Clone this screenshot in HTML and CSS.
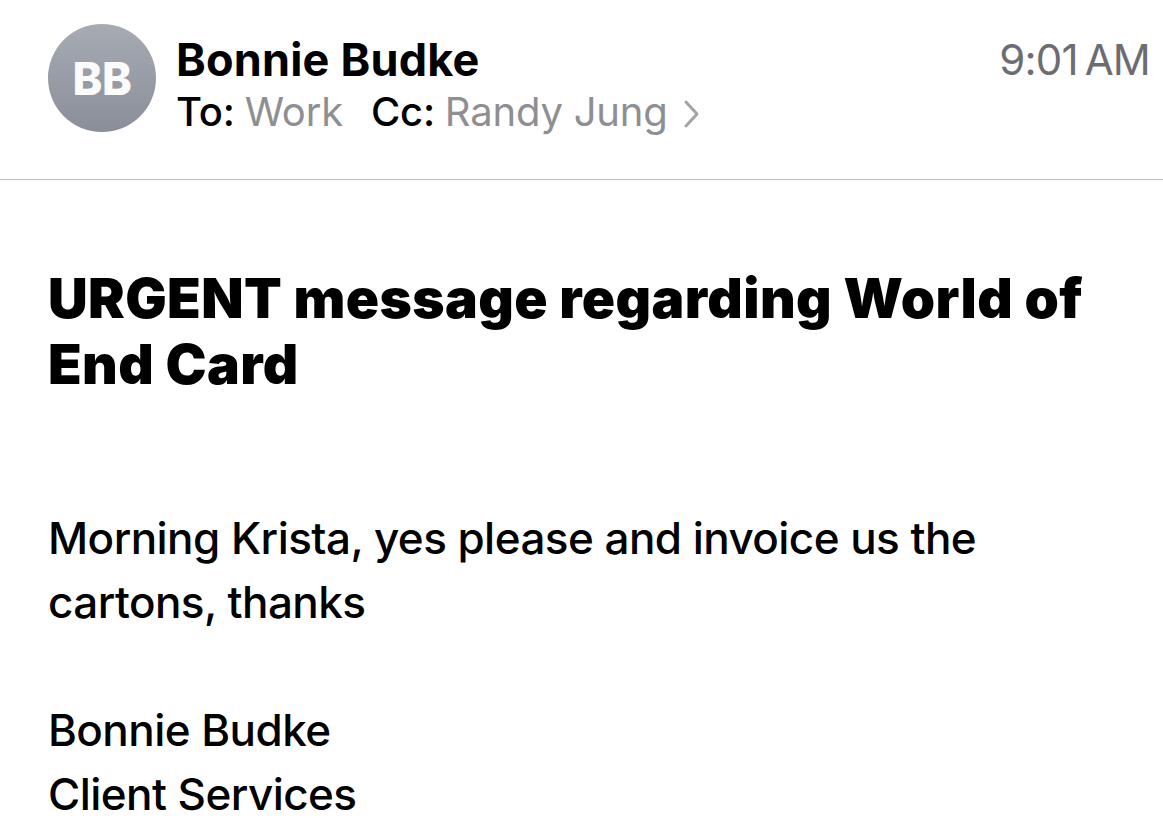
FILE: index.html
```html
<!DOCTYPE html>
<html lang="en">
<head>
<meta charset="utf-8">
<link rel="stylesheet" href="styles.css">
<title>Mail</title>
</head>
<body>
<header class="header">
  <div class="avatar">BB</div>
  <div class="meta">
    <div class="sender">Bonnie Budke</div>
    <div class="recips">
      <span class="label">To:</span> <span class="value">Work</span>
      <span class="label cc">Cc:</span> <span class="value">Randy Jung</span>
      <svg class="chev" width="18" height="32" viewBox="0 0 18 32"><path d="M4 4 L15 16 L4 28" fill="none" stroke="#a3a3a8" stroke-width="3" stroke-linecap="round" stroke-linejoin="round"/></svg>
    </div>
  </div>
  <div class="time">9:01&#8239;AM</div>
</header>
<main class="content">
  <h1 class="subject">URGENT message regarding World of End Card</h1>
  <p class="para">Morning Krista, yes please and invoice us the cartons, thanks</p>
  <p class="para">Bonnie Budke<br>Client Services</p>
</main>
</body>
</html>
```

FILE: styles.css
```css
html, body {
  margin: 0;
  padding: 0;
  background: #ffffff;
}
body {
  font-family: "Inter", "Liberation Sans", sans-serif;
  color: #000;
  width: 1163px;
  height: 818px;
  overflow: hidden;
}
.header {
  display: flex;
  align-items: flex-start;
  height: 155px;
  padding: 24px 13px 0 48px;
  border-bottom: 1px solid #bdbdbd;
}
.avatar {
  width: 108px;
  height: 108px;
  border-radius: 50%;
  background: linear-gradient(180deg, #a7abb4 0%, #8a8e98 100%);
  color: #fbfbfc;
  font-weight: 800;
  font-size: 45px;
  display: flex;
  align-items: center;
  justify-content: center;
  letter-spacing: -0.5px;
  flex-shrink: 0;
}
.meta {
  margin-left: 20px;
  flex: 1;
}
.sender {
  font-weight: 700;
  font-size: 45px;
  line-height: 52px;
  margin-top: 10px;
  letter-spacing: 0.2px;
}
.recips {
  font-size: 40px;
  line-height: 52px;
  display: flex;
  align-items: center;
  letter-spacing: -0.2px;
}
.label {
  font-weight: 500;
  margin-right: 10px;
}
.label.cc {
  margin-left: 28px;
}
.value {
  color: #8e8e93;
}
.chev {
  margin-left: 14px;
  margin-top: 4px;
}
.time {
  font-size: 42px;
  line-height: 52px;
  margin-top: 10px;
  color: #6c6c71;
  letter-spacing: -0.8px;
}
.content {
  padding: 85px 48px 0 48px;
}
.subject {
  margin: 0;
  font-size: 55px;
  line-height: 66px;
  font-weight: 900;
  letter-spacing: 0.4px;
  width: 1090px;
}
.para {
  margin: 109px 0 0 0;
  font-size: 44px;
  line-height: 64px;
  font-weight: 500;
  letter-spacing: -0.55px;
  width: 1000px;
}
.para + .para {
  margin-top: 64px;
}
```
